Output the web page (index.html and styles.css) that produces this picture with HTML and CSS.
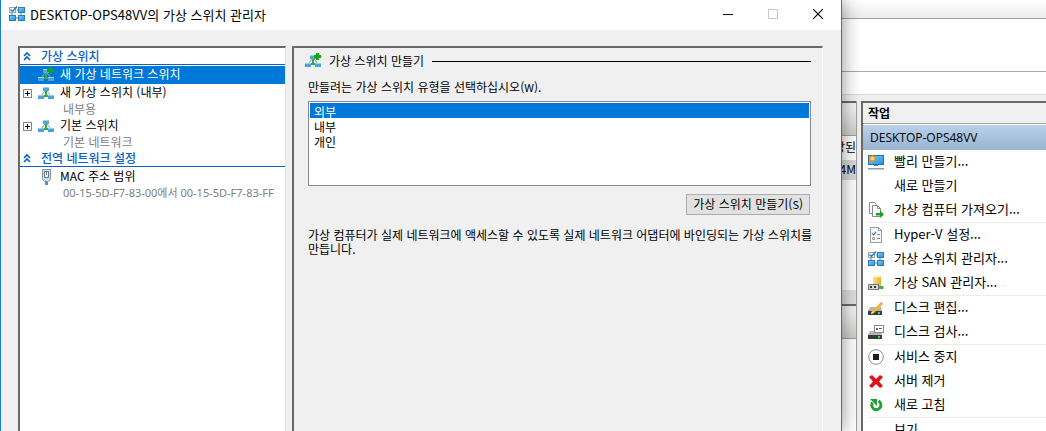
FILE: index.html
```html
<!DOCTYPE html>
<html lang="ko">
<head>
  <meta charset="utf-8">
  <title>가상 스위치 관리자</title>
  <link rel="stylesheet" href="styles.css">
</head>
<body>
  <!-- shared icons -->
  <svg class="sprite" width="0" height="0">
    <defs>
      <linearGradient id="blue" x1="0" y1="0" x2="1" y2="1">
        <stop offset="0" stop-color="#7fd0fa"/>
        <stop offset="1" stop-color="#1f8fe0"/>
      </linearGradient>
      <linearGradient id="gold" x1="0" y1="0" x2="1" y2="0">
        <stop offset="0" stop-color="#fbe08a"/>
        <stop offset="1" stop-color="#e9b02c"/>
      </linearGradient>
    </defs>
    <symbol id="i-switch" viewBox="0 0 16 16">
      <path d="M7 6h2v4h3v2H4v-2h3z" fill="#35a845"/>
      <path d="M3 11l4-5M13 11L9 6" stroke="#8fa39a" fill="none"/>
      <rect x="5" y="2" width="6" height="4" fill="#4fa9dc"/>
      <rect x="0" y="10" width="6" height="4" fill="#4aa3dc"/>
      <rect x="10" y="10" width="6" height="4" fill="#4aa3dc"/>
      <path d="M5 2h6v1H5zM0 10h6v1H0zM10 10h6v1h-6z" fill="#8ed3f3"/>
    </symbol>
    <symbol id="i-switch-add" viewBox="0 0 16 16">
      <use href="#i-switch" width="16" height="16"/>
      <path d="M11 0h3v2h2v3h-2v2h-3V5H9V2h2z" fill="#11a811"/>
    </symbol>
    <symbol id="i-manager" viewBox="0 0 16 16">
      <rect x=".5" y="1.500" width="6" height="5" fill="#fff" stroke="#9aa4ad"/>
      <path d="M1.500 3.500l2 2L8 .5" fill="none" stroke="#1e7fd0" stroke-width="1.500"/>
      <path d="M3 7v3M12 7v3M7 12h3M8 4h2" stroke="#4d7fa3"/>
      <rect x="9.500" y="1.500" width="6" height="5" fill="url(#blue)" stroke="#2b7db8"/>
      <rect x=".5" y="9.500" width="6" height="5" fill="url(#blue)" stroke="#2b7db8"/>
      <rect x="9.500" y="9.500" width="6" height="5" fill="url(#blue)" stroke="#2b7db8"/>
    </symbol>
    <symbol id="i-plug" viewBox="0 0 16 16">
      <path d="M7 12h3v4H7z" fill="#3c9cc9"/>
      <path d="M4.500.5h8v10l-2 2h-4l-2-2z" fill="#cfdae4" stroke="#8496a8"/>
      <path d="M6.500 2.500h4v6h-4z" fill="#eef3f7" stroke="#65788b"/>
      <path d="M8.500 3v3" stroke="#65788b"/>
    </symbol>
    <symbol id="i-chevrons" viewBox="0 0 8 9">
      <path d="M1 4l3-3 3 3M1 8l3-3 3 3" fill="none" stroke="#0a62c4" stroke-width="1.700"/>
    </symbol>
    <symbol id="i-quick" viewBox="0 0 16 16">
      <rect x=".5" y="1.500" width="15" height="9" fill="url(#blue)" stroke="#2673a8"/>
      <path d="M6 11h4v1H6z" fill="#4d7fa3"/>
      <path d="M0 14h16v1.500H0z" fill="#8e9bb3"/>
      <path d="M4.500 1v7M1 4.500h7M2 2l5 5M7 2L2 7" stroke="#e88a10" stroke-width="1.300"/>
      <circle cx="4.500" cy="4.500" r="2" fill="#ffd763"/>
    </symbol>
    <symbol id="i-import" viewBox="0 0 16 16">
      <path d="M1.500.5h5l2 2v9h-7z" fill="#f7f7f7" stroke="#8a8a8a"/>
      <path d="M4.500 3.500h5l3 3v8h-8z" fill="#fff" stroke="#8a8a8a"/>
      <path d="M9.500 3.500v3h3" fill="none" stroke="#8a8a8a"/>
      <path d="M8 11h4V8.500l4 4-4 3.500v-2.500H8z" fill="#1b9e2b"/>
    </symbol>
    <symbol id="i-settings" viewBox="0 0 16 16">
      <path d="M2.500.5h8l3 3v12h-11z" fill="#f7f8f9" stroke="#9a9a9a"/>
      <path d="M10.500.5v3h3" fill="none" stroke="#9a9a9a"/>
      <path d="M4 6l1.500 2L8 5" fill="none" stroke="#2f86d6" stroke-width="1.200"/>
      <path d="M9 7.500h3M9 11.500h3" stroke="#8a8a8a"/>
      <rect x="4.500" y="10.500" width="2" height="2" fill="none" stroke="#b0b0b0"/>
    </symbol>
    <symbol id="i-san" viewBox="0 0 16 16">
      <path d="M5 1h8v11H5z" fill="url(#gold)"/>
      <ellipse cx="9" cy="1.500" rx="4" ry="1" fill="#fdf0bd"/>
      <rect x=".5" y="9.500" width="10" height="5" fill="#d8d8d8" stroke="#777"/>
      <path d="M2 11h2v2H2zM6 11h2v2H6z" fill="#333"/>
      <path d="M11 11h4v3h-4z" fill="#3bb54a"/>
      <path d="M15 11h1v3h-1z" fill="#a8d8ae"/>
    </symbol>
    <symbol id="i-disk" viewBox="0 0 16 16">
      <path d="M2 7h11l1 4H0z" fill="#b5b5b5"/>
      <path d="M0 11h14v4H0z" fill="#3b3b3b"/>
      <path d="M10 12h2v2h-2z" fill="#3fdb3f"/>
    </symbol>
    <symbol id="i-edit" viewBox="0 0 16 16">
      <use href="#i-disk" width="16" height="16"/>
      <path d="M4 11l8-8 2 2-8 8-3 1z" fill="#f3b62e"/>
      <path d="M12 3l1-1 2 2-1 1z" fill="#d98b80"/>
      <path d="M4 11l2 2-3 1z" fill="#f5dfb5"/>
    </symbol>
    <symbol id="i-inspect" viewBox="0 0 16 16">
      <use href="#i-disk" width="16" height="16"/>
      <rect x="6.500" y="1.500" width="9" height="7" fill="#fff" stroke="#858b91"/>
      <path d="M8 4h2v2H8zM11 4h3v1h-3z" fill="#5e6a74"/>
    </symbol>
    <symbol id="i-stop" viewBox="0 0 16 16">
      <circle cx="8" cy="8" r="7.300" fill="#fff" stroke="#8a8a8a"/>
      <rect x="5" y="5" width="6" height="6" fill="#1c1c1c"/>
    </symbol>
    <symbol id="i-remove" viewBox="0 0 16 16">
      <path d="M1 4l3-2 4 4 4-4 3 2-4 4.500 4 4.500-3 2-4-4-4 4-3-2 4-4.500z" fill="#e0101c"/>
    </symbol>
    <symbol id="i-refresh" viewBox="0 0 16 16">
      <path d="M10.500 4A4.600 4.600 0 1 1 4.500 5.500" fill="none" stroke="#1ea035" stroke-width="3"/>
      <path d="M2 2h7v7z" fill="#1ea035"/>
    </symbol>
  </svg>

  <div class="desktop">
    <section class="dialog">
      <header class="titlebar">
        <svg class="icon"><use href="#i-manager"/></svg>
        <h1>DESKTOP-OPS48VV의 가상 스위치 관리자</h1>
        <button class="caption-btn" aria-label="최소화"><svg width="10" height="10"><path d="M0 5.500h10" stroke="#000"/></svg></button>
        <button class="caption-btn" aria-label="최대화" disabled><svg width="10" height="10"><path d="M.5.5h9v9h-9z" fill="none" stroke="#c8c8c8"/></svg></button>
        <button class="caption-btn" aria-label="닫기"><svg width="10" height="10"><path d="M0 0l10 10M10 0L0 10" stroke="#000" stroke-width="1.200"/></svg></button>
      </header>

      <div class="dialog-body">
        <nav class="tree">
          <h2 class="tree-head"><svg class="chevrons"><use href="#i-chevrons"/></svg><span>가상 스위치</span></h2>
          <button class="tree-item selected">
            <svg class="icon"><use href="#i-switch-add"/></svg>
            <span>새 가상 네트워크 스위치</span>
          </button>
          <button class="tree-item">
            <i class="expander"></i>
            <svg class="icon"><use href="#i-switch"/></svg>
            <span>새 가상 스위치 (내부)</span>
            <small>내부용</small>
          </button>
          <button class="tree-item">
            <i class="expander"></i>
            <svg class="icon"><use href="#i-switch"/></svg>
            <span>기본 스위치</span>
            <small>기본 네트워크</small>
          </button>
          <h2 class="tree-head"><svg class="chevrons"><use href="#i-chevrons"/></svg><span>전역 네트워크 설정</span></h2>
          <button class="tree-item">
            <svg class="icon"><use href="#i-plug"/></svg>
            <span>MAC 주소 범위</span>
            <small class="mac">00-15-5D-F7-83-00에서 00-15-5D-F7-83-FF</small>
          </button>
        </nav>

        <main class="panel">
          <h2 class="panel-head">
            <svg class="icon"><use href="#i-switch-add"/></svg>
            <span>가상 스위치 만들기</span>
          </h2>
          <label for="switch-type">만들려는 가상 스위치 유형을 선택하십시오(<span class="key">W</span>).</label>
          <select id="switch-type" size="5">
            <option selected>외부</option>
            <option>내부</option>
            <option>개인</option>
          </select>
          <button class="button">가상 스위치 만들기(<span class="key">S</span>)</button>
          <p>가상 컴퓨터가 실제 네트워크에 액세스할 수 있도록 실제 네트워크 어댑터에 바인딩되는 가상 스위치를 만듭니다.</p>
        </main>
      </div>
    </section>

    <section class="console">
      <div class="console-title"></div>
      <div class="console-menu"></div>
      <div class="console-toolbar"></div>
      <div class="console-body">
        <div class="vm-column">
          <div class="vm-list">
            <div class="vm-head"></div>
            <div class="vm-cell">당된</div>
            <div class="vm-cell active">4M</div>
          </div>
          <div class="vm-gap"></div>
          <div class="vm-list">
            <div class="vm-head"></div>
          </div>
        </div>
        <aside class="actions">
          <h2>작업</h2>
          <h3>DESKTOP-OPS48VV</h3>
          <ul>
            <li><button><svg class="icon"><use href="#i-quick"/></svg><span>빨리 만들기...</span></button></li>
            <li><button><svg class="icon"></svg><span>새로 만들기</span></button></li>
            <li><button><svg class="icon"><use href="#i-import"/></svg><span>가상 컴퓨터 가져오기...</span></button></li>
            <li class="split"><button><svg class="icon"><use href="#i-settings"/></svg><span>Hyper-V 설정...</span></button></li>
            <li><button><svg class="icon"><use href="#i-manager"/></svg><span>가상 스위치 관리자...</span></button></li>
            <li><button><svg class="icon"><use href="#i-san"/></svg><span>가상 SAN 관리자...</span></button></li>
            <li class="split"><button><svg class="icon"><use href="#i-edit"/></svg><span>디스크 편집...</span></button></li>
            <li><button><svg class="icon"><use href="#i-inspect"/></svg><span>디스크 검사...</span></button></li>
            <li class="split"><button><svg class="icon"><use href="#i-stop"/></svg><span>서비스 중지</span></button></li>
            <li><button><svg class="icon"><use href="#i-remove"/></svg><span>서버 제거</span></button></li>
            <li><button><svg class="icon"><use href="#i-refresh"/></svg><span>새로 고침</span></button></li>
            <li class="split"><button><svg class="icon"></svg><span>보기</span></button></li>
          </ul>
        </aside>
      </div>
    </section>
  </div>
</body>
</html>
```

FILE: styles.css
```css
* {
  box-sizing: border-box;
}

body {
  margin: 0;
  font-family: "Noto Sans CJK KR", sans-serif;
  font-size: 12px;
  line-height: 15px;
  color: #000;
  background-color: #f0f0f0;
  overflow: hidden;
}

h1, h2, h3, p, ul {
  margin: 0;
  padding: 0;
  font-size: 12px;
  font-weight: normal;
}

button {
  font: inherit;
  color: inherit;
  border: none;
  background: none;
  padding: 0;
  text-align: left;
}

.sprite {
  position: absolute;
}

.icon {
  width: 16px;
  height: 16px;
  flex: none;
}

.desktop {
  display: flex;
  height: 100vh;
  overflow: hidden;
}

/* dialog window */
.dialog {
  flex: 1;
  min-width: 0;
  display: flex;
  flex-direction: column;
  background-color: #f0f0f0;
  border: 1px solid #1a7fd4;
  border-width: 0 1px;
  box-shadow: 0 0 18px rgba(0,0,0,0.45);
  z-index: 1;
}

.titlebar {
  display: flex;
  align-items: center;
  height: 30px;
  padding: 0 1px 2px 8px;
  background-color: white;
}

.titlebar h1 {
  flex: 1;
  padding-left: 5px;
  font-size: 13px;
}

.caption-btn {
  width: 45px;
  height: 28px;
  display: flex;
  align-items: center;
  justify-content: center;
}

.dialog-body {
  flex: 1;
  display: flex;
  gap: 6px;
  padding: 16px 18px 0 17px;
}

/* left tree */
.tree {
  width: 268px;
  background-color: white;
  border: 2px solid #696969;
  border-color: #696969 #e3e3e3 #e3e3e3 #696969;
  border-width: 2px 1px 0 2px;
}

.tree-head {
  display: flex;
  align-items: center;
  height: 17px;
  padding-left: 3px;
  gap: 10px;
  margin-bottom: 1px;
  color: #0a62c4;
  font-weight: 500;
  border-bottom: 1px solid #0a62c4;
}

.tree-head span,
.panel-head span {
  padding-bottom: 2px;
}

.chevrons {
  width: 8px;
  height: 9px;
}

.tree-item {
  display: grid;
  grid-template-columns: 15px 16px 1fr;
  align-items: center;
  width: 100%;
  padding-left: 3px;
  line-height: 16px;
}

.tree-item .icon {
  grid-column: 2;
}

.tree-item span {
  padding: 0 0 2px 6px;
}

.tree-item small {
  grid-column: 3;
  padding-left: 9px;
  font-size: 12px;
  line-height: 13px;
  padding-bottom: 2px;
  color: #808080;
}

.tree-item .mac {
  font-size: 11px;
  font-family: "Noto Sans", "Noto Sans CJK KR", sans-serif;
}

.tree-item.selected {
  background-color: #0078d7;
  color: white;
}

.expander {
  width: 9px;
  height: 9px;
  border: 1px solid #7a8ba0;
  background: linear-gradient(#000, #000) center / 5px 1px no-repeat,
    linear-gradient(#000, #000) center / 1px 5px no-repeat, white;
}

/* right panel */
.panel {
  flex: 1;
  display: flex;
  flex-direction: column;
  border: 2px solid #696969;
  border-color: #696969 #fff #fff #696969;
  border-width: 2px 1px 0 2px;
  padding: 5px 11px 0 14px;
}

.panel-head {
  display: flex;
  align-items: center;
  gap: 8px;
  height: 16px;
  margin-left: -3px;
}

.panel-head::after {
  content: "";
  flex: 1;
  height: 1px;
  background-color: #000;
}

.panel label {
  margin: 10px 0 6px;
}

.key {
  font-size: 11px;
}

.panel select {
  height: 85px;
  border: 1px solid #828790;
  border-radius: 0;
  padding: 1px;
  background-color: white;
  font: inherit;
  outline: none;
  overflow: hidden;
}

.panel option {
  height: 15px;
  min-height: 15px;
  line-height: 12px;
  padding: 0 4px;
  color: #000;
}

.panel option:checked {
  background: linear-gradient(#0078d7, #0078d7);
  color: white;
}

.button {
  align-self: flex-end;
  height: 21px;
  margin: 8px 1px 13px;
  padding: 0 6px 2px;
  border: 1px solid #adadad;
  background-color: #e1e1e1;
}

.panel p {
  margin-right: -8px;
  line-height: 14px;
  word-break: keep-all;
}

/* console window behind the dialog */
.console {
  width: 204px;
  display: flex;
  flex-direction: column;
  background-color: #f0f0f0;
}

.console-title {
  height: 19px;
  background: linear-gradient(#fff, #ececec);
  border-bottom: 1px solid #a0a0a0;
}

.console-menu {
  height: 53px;
  background-color: white;
  border-bottom: 1px solid #a8a8a8;
}

.console-toolbar {
  height: 23px;
  background-color: white;
  border-bottom: 1px solid #d9d9d9;
}

.console-body {
  flex: 1;
  min-height: 0;
  display: flex;
  gap: 4px;
  padding-top: 6px;
}

.vm-column {
  width: 15px;
  border-right: 1px solid #a0a0a0;
}

.vm-list {
  background-color: white;
  border-top: 2px solid #696969;
  height: 189px;
  overflow: hidden;
}

.vm-head {
  height: 33px;
  border-top: 7px solid #f0f0f0;
  border-bottom: 1px solid #a0a0a0;
  background: linear-gradient(#f0f0f0, #d0cec8);
  margin-bottom: 2px;
}

.vm-cell {
  display: flex;
  justify-content: flex-end;
  height: 20px;
  line-height: 17px;
  white-space: nowrap;
}

.vm-cell.active {
  margin-top: 2px;
  background-color: #d9d9d9;
}

.vm-gap {
  height: 14px;
  background-color: #e0e0e0;
}

.actions {
  flex: 1;
  background-color: white;
  border: 2px solid #696969;
  border-width: 2px 0 0 2px;
  overflow: hidden;
}

.actions h2 {
  height: 21px;
  padding-left: 5px;
  line-height: 20px;
  font-weight: bold;
  background-color: #f0f0f0;
  border-bottom: 1px solid #a0a0a0;
}

.actions h3 {
  height: 25px;
  margin-top: 1px;
  padding-left: 7px;
  line-height: 25px;
  font-family: "Open Sans", "Noto Sans CJK KR", sans-serif;
  background: linear-gradient(#b9d1ea, #99b4d1);
}

.actions ul {
  list-style: none;
  padding-left: 5px;
  font-size: 13px;
}

.actions li button {
  display: flex;
  align-items: center;
  gap: 10px;
  width: 100%;
  height: 24px;
  padding-bottom: 1px;
  white-space: nowrap;
}

.actions li span {
  padding-bottom: 2px;
}

.actions .split {
  border-top: 1px solid #ececec;
}
```
